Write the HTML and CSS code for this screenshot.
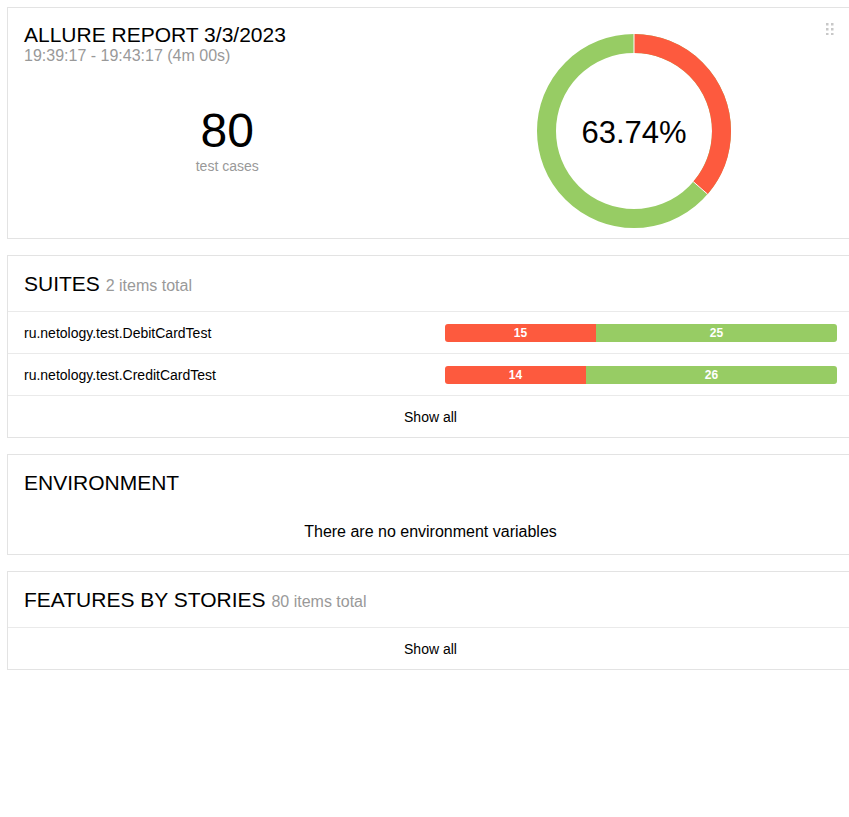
FILE: index.html
```html
<!DOCTYPE html>
<html lang="en">
<head>
<meta charset="utf-8">
<title>Allure Report</title>
<link rel="stylesheet" href="styles.css">
</head>
<body>
<div class="page">
  <section class="card summary">
    <div class="summary__left">
      <h1 class="summary__title">ALLURE REPORT 3/3/2023</h1>
      <div class="summary__time">19:39:17 - 19:43:17 (4m 00s)</div>
      <div class="summary__count">
        <div class="summary__num">80</div>
        <div class="summary__label">test cases</div>
      </div>
    </div>
    <div class="summary__right">
      <svg class="donut" width="200" height="200" viewBox="0 0 200 200">
        <g transform="rotate(-90 100 100)">
          <circle cx="100" cy="100" r="87.5" fill="none" stroke="#97cc64" stroke-width="19"/>
          <circle cx="100" cy="100" r="87.5" fill="none" stroke="#fd5a3e" stroke-width="19" stroke-dasharray="199.3 549.8"/>
        </g>
        <line x1="100" y1="3" x2="100" y2="22" stroke="#fff" stroke-width="1"/>
        <line x1="159.2" y1="150.6" x2="173.5" y2="163.1" stroke="#fff" stroke-width="1"/>
        <text class="donut__text" x="100" y="112" text-anchor="middle">63.74%</text>
      </svg>
    </div>
    <svg class="handle" width="8" height="12" viewBox="0 0 8 12">
      <rect x="0" y="0" width="2.5" height="2.5" fill="#c8c8c8"/>
      <rect x="5" y="0" width="2.5" height="2.5" fill="#c8c8c8"/>
      <rect x="0" y="5" width="2.5" height="2.5" fill="#c8c8c8"/>
      <rect x="5" y="5" width="2.5" height="2.5" fill="#c8c8c8"/>
      <rect x="0" y="10" width="2.5" height="2.5" fill="#c8c8c8"/>
      <rect x="5" y="10" width="2.5" height="2.5" fill="#c8c8c8"/>
    </svg>
  </section>

  <section class="card">
    <h2 class="card__header">SUITES <span class="card__sub">2 items total</span></h2>
    <div class="row">
      <div class="row__name">ru.netology.test.DebitCardTest</div>
      <div class="bar">
        <div class="bar__seg bar__seg--failed" style="width:151px">15</div>
        <div class="bar__seg bar__seg--passed">25</div>
      </div>
    </div>
    <div class="row">
      <div class="row__name">ru.netology.test.CreditCardTest</div>
      <div class="bar">
        <div class="bar__seg bar__seg--failed" style="width:141px">14</div>
        <div class="bar__seg bar__seg--passed">26</div>
      </div>
    </div>
    <div class="row row--link">Show all</div>
  </section>

  <section class="card">
    <h2 class="card__header card__header--plain">ENVIRONMENT</h2>
    <div class="empty">There are no environment variables</div>
  </section>

  <section class="card">
    <h2 class="card__header">FEATURES BY STORIES <span class="card__sub">80 items total</span></h2>
    <div class="row row--link">Show all</div>
  </section>
</div>
</body>
</html>
```
FILE: styles.css
```css
html, body {
  margin: 0;
  padding: 0;
  overflow: hidden;
  background: #fff;
}

body {
  font-family: "Liberation Sans", Arial, sans-serif;
  color: #000;
}

.page {
  padding: 7px 0 0 7px;
  display: flex;
  flex-direction: column;
  gap: 16px;
}

.card {
  box-sizing: border-box;
  width: 847px;
  border: 1px solid #e3e3e3;
  background: #fff;
}

/* Summary card */
.summary {
  position: relative;
  display: grid;
  grid-template-columns: 1fr 1fr;
  padding: 15px 16px 7px 16px;
}

.summary__title {
  margin: 0;
  font-size: 21px;
  line-height: 24px;
  font-weight: normal;
}

.summary__time {
  font-size: 16px;
  line-height: 18px;
  color: #999;
}

.summary__count {
  margin-top: 42px;
  text-align: center;
}

.summary__num {
  font-size: 48px;
  line-height: 48px;
}

.summary__label {
  font-size: 14px;
  line-height: 16px;
  color: #999;
  margin-top: 3px;
}

.summary__right {
  display: flex;
  justify-content: center;
  padding-top: 8px;
}

.donut {
  display: block;
}

.donut__text {
  font-family: "Liberation Sans", Arial, sans-serif;
  font-size: 31px;
  fill: #000;
}

.handle {
  position: absolute;
  left: 818px;
  top: 15px;
}

/* Generic cards */
.card__header {
  margin: 0;
  padding: 16px 16px 15px 16px;
  font-size: 21px;
  line-height: 24px;
  height: 24px;
  font-weight: normal;
  border-bottom: 1px solid #eaeaea;
}

.card__header--plain {
  border-bottom: none;
}

.card__sub {
  font-size: 16px;
  line-height: 16px;
  color: #999;
}

.row {
  display: flex;
  align-items: center;
  height: 41px;
  padding: 0 16px;
  font-size: 14px;
  border-bottom: 1px solid #eaeaea;
}

.row:last-child {
  border-bottom: none;
}

.row__name {
  flex: 1;
}

.row--link {
  justify-content: center;
}

.bar {
  display: flex;
  width: 392px;
  height: 18px;
  border-radius: 3px;
  overflow: hidden;
}

.bar__seg {
  display: flex;
  align-items: center;
  justify-content: center;
  color: #fff;
  font-size: 12px;
  font-weight: bold;
}

.bar__seg--failed {
  background: #fd5a3e;
}

.bar__seg--passed {
  flex: 1;
  background: #97cc64;
}

.empty {
  padding: 13px 16px 13px 16px;
  font-size: 16px;
  line-height: 18px;
  text-align: center;
}
```
